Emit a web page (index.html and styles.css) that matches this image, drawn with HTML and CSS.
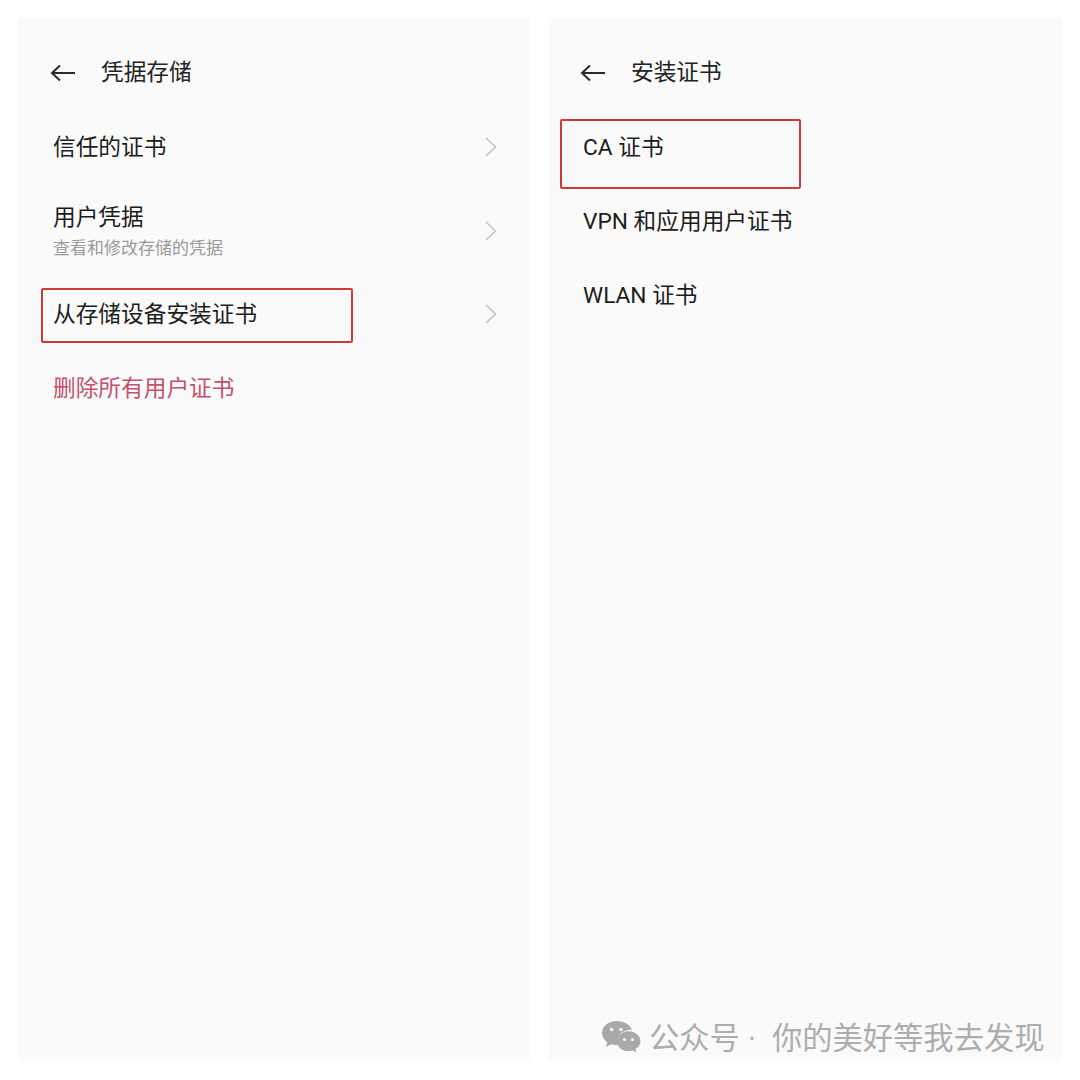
FILE: index.html
```html
<!DOCTYPE html>
<html lang="zh-CN">
<head>
<meta charset="utf-8">
<title>凭据存储</title>
<link rel="stylesheet" href="styles.css">
</head>
<body>
<main class="page">
  <section class="panel panel-left">
    <header class="bar">
      <svg class="back" width="26" height="18" viewBox="0 0 26 18"><path d="M25 9H2M10 1.500 2 9l8 7.500" fill="none" stroke="#2a2a2a" stroke-width="2"/></svg>
      <h1 class="title">凭据存储</h1>
    </header>
    <div class="list">
      <div class="row row-one"><span class="label">信任的证书</span><svg class="chev" width="12" height="20" viewBox="0 0 12 20"><path d="M1 1 10.500 10 1 19" fill="none" stroke="#c4c4c4" stroke-width="1.700"/></svg></div>
      <div class="row row-two"><div class="stack"><span class="label">用户凭据</span><span class="sub">查看和修改存储的凭据</span></div><svg class="chev" width="12" height="20" viewBox="0 0 12 20"><path d="M1 1 10.500 10 1 19" fill="none" stroke="#c4c4c4" stroke-width="1.700"/></svg></div>
      <div class="row row-three"><span class="label">从存储设备安装证书</span><svg class="chev" width="12" height="20" viewBox="0 0 12 20"><path d="M1 1 10.500 10 1 19" fill="none" stroke="#c4c4c4" stroke-width="1.700"/></svg><i class="mark mark-left"></i></div>
      <div class="row row-four"><span class="label danger">删除所有用户证书</span></div>
    </div>
  </section>
  <section class="panel panel-right">
    <header class="bar">
      <svg class="back" width="26" height="18" viewBox="0 0 26 18"><path d="M25 9H2M10 1.500 2 9l8 7.500" fill="none" stroke="#2a2a2a" stroke-width="2"/></svg>
      <h1 class="title">安装证书</h1>
    </header>
    <div class="list list-right">
      <div class="row row-plain"><span class="label">CA 证书</span><i class="mark mark-right"></i></div>
      <div class="row row-plain"><span class="label">VPN 和应用用户证书</span></div>
      <div class="row row-plain"><span class="label">WLAN 证书</span></div>
    </div>
    <div class="watermark">
      <svg class="wechat" width="40" height="33" viewBox="0 0 40 33">
        <path d="M15.500 1C7.500 1 1 6.300 1 13c0 3.800 2.100 7.100 5.400 9.400L5 27l5.200-2.700c1.600.5 3.300.8 5.300.8.500 0 1 0 1.400-.1-.4-1.200-.6-2.400-.6-3.700 0-6.500 6-11.500 13.600-11.500h1.100C29.300 4.600 23 1 15.500 1Z" fill="#a9a9a9"/>
        <path d="M39.500 21.200c0-5.500-5.400-9.900-11.800-9.900-6.600 0-11.800 4.400-11.800 9.900s5.200 9.900 11.800 9.900c1.400 0 2.700-.2 3.900-.6l3.900 2.100-1-3.600c3-2 5-4.700 5-7.800Z" fill="#a9a9a9"/>
        <circle cx="10.500" cy="9.500" r="1.800" fill="#fafafa"/><circle cx="20" cy="9.500" r="1.800" fill="#fafafa"/>
        <circle cx="23.500" cy="19.500" r="1.500" fill="#fafafa"/><circle cx="31.500" cy="19.500" r="1.500" fill="#fafafa"/>
      </svg>
      <span class="wm-name">公众号</span><span class="wm-dot">·</span><span class="wm-name">你的美好等我去发现</span>
    </div>
  </section>
</main>
</body>
</html>
```

FILE: styles.css
```css
* { box-sizing: border-box; }
html, body { margin: 0; padding: 0; background: #fff; }
body { width: 1080px; height: 1080px; overflow: hidden; font-family: Roboto, "Noto Sans CJK SC", "Noto Sans", sans-serif; }
.page { display: flex; gap: 18px; padding: 18px 18px 20px 18px; height: 1080px; }
.panel { position: relative; flex: 0 0 auto; height: 1042px; background: #fafafa; }
.panel-left { width: 512px; padding: 0 32px 0 35px; }
.panel-right { width: 514px; padding: 0 32px 0 35px; }
.bar { display: flex; align-items: center; height: 107px; gap: 25px; margin-left: -3px; }
.back { flex: none; margin-top: 2px; }
.title { margin: 0; padding-top: 2px; font-size: 22.700px; font-weight: 400; line-height: 30px; color: #222; }
.list { display: flex; flex-direction: column; }
.row { position: relative; display: flex; align-items: center; justify-content: space-between; }
.row-one { height: 43px; }
.row-two { height: 81px; margin-top: 22px; }
.row-three { height: 56px; margin-top: 14px; }
.row-four { height: 44px; margin-top: 24px; }
.row-plain { height: 43px; margin-bottom: 31px; }
.stack { display: flex; flex-direction: column; gap: 3.500px; }
.label { padding-top: 3px; font-size: 22.700px; line-height: 30px; color: #1c1c1c; }
.stack .label { padding-top: 2px; }
.sub { font-size: 17px; line-height: 24px; color: #9a9a9a; }
.danger { color: #c4506a; }
.chev { flex: none; margin-right: 1px; }
.row-three .chev { margin-top: 2px; }
.mark { position: absolute; border: 2px solid #cc3b3a; border-radius: 2px; }
.mark-left { left: -12px; top: 3px; width: 312px; height: 55px; }
.mark-right { left: -23px; top: -6px; width: 241px; height: 70px; }
.watermark { position: absolute; left: 54px; bottom: 7px; display: flex; align-items: center; height: 34px; color: #adadad; font-size: 30.300px; line-height: 34px; white-space: nowrap; }
.wechat { margin-left: -1px; margin-right: 8px; flex: none; }
.wm-name { padding-top: 6px; }
.wm-dot { width: 32px; padding-top: 6px; padding-right: 8px; text-align: center; }
```
